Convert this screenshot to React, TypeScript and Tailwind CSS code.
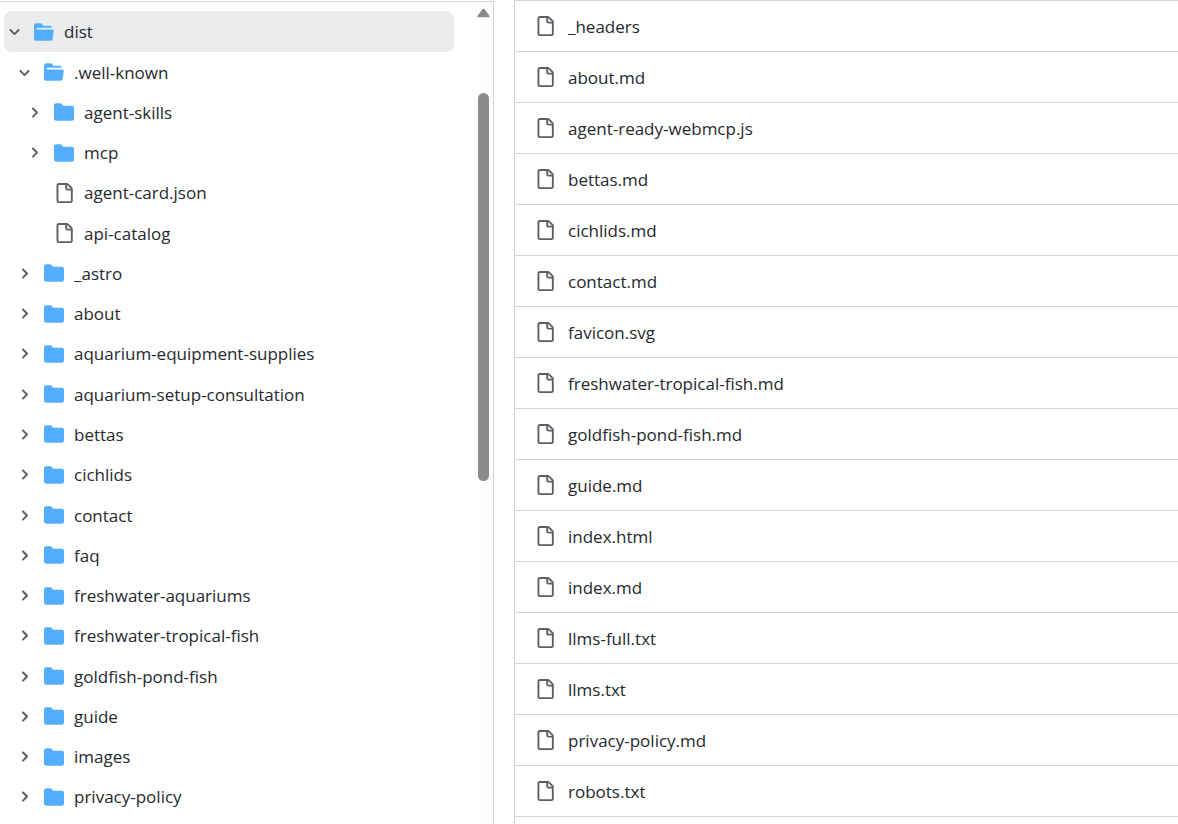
import { useState } from "react";

type TreeItem = {
  name: string;
  level: number;
  kind: "folder" | "open" | "file";
};

const tree: TreeItem[] = [
  { name: "dist", level: 0, kind: "open" },
  { name: ".well-known", level: 1, kind: "open" },
  { name: "agent-skills", level: 2, kind: "folder" },
  { name: "mcp", level: 2, kind: "folder" },
  { name: "agent-card.json", level: 2, kind: "file" },
  { name: "api-catalog", level: 2, kind: "file" },
  { name: "_astro", level: 1, kind: "folder" },
  { name: "about", level: 1, kind: "folder" },
  { name: "aquarium-equipment-supplies", level: 1, kind: "folder" },
  { name: "aquarium-setup-consultation", level: 1, kind: "folder" },
  { name: "bettas", level: 1, kind: "folder" },
  { name: "cichlids", level: 1, kind: "folder" },
  { name: "contact", level: 1, kind: "folder" },
  { name: "faq", level: 1, kind: "folder" },
  { name: "freshwater-aquariums", level: 1, kind: "folder" },
  { name: "freshwater-tropical-fish", level: 1, kind: "folder" },
  { name: "goldfish-pond-fish", level: 1, kind: "folder" },
  { name: "guide", level: 1, kind: "folder" },
  { name: "images", level: 1, kind: "folder" },
  { name: "privacy-policy", level: 1, kind: "folder" },
];

const files = [
  "_headers",
  "about.md",
  "agent-ready-webmcp.js",
  "bettas.md",
  "cichlids.md",
  "contact.md",
  "favicon.svg",
  "freshwater-tropical-fish.md",
  "goldfish-pond-fish.md",
  "guide.md",
  "index.html",
  "index.md",
  "llms-full.txt",
  "llms.txt",
  "privacy-policy.md",
  "robots.txt",
];

const indent = ["pl-[3px]", "pl-[13px]", "pl-[23px]"];

const paths = {
  folder:
    "M1.75 1A1.75 1.75 0 0 0 0 2.75v10.5C0 14.216.784 15 1.75 15h12.5A1.75 1.75 0 0 0 16 13.25v-8.5A1.75 1.75 0 0 0 14.25 3H7.5a.25.25 0 0 1-.2-.1l-.9-1.2C6.07 1.26 5.55 1 5 1H1.75Z",
  open: "M.513 1.513A1.75 1.75 0 0 1 1.75 1h3.5c.55 0 1.07.26 1.4.7l.9 1.2a.25.25 0 0 0 .2.1H13a1 1 0 0 1 1 1v.5H2.75a.75.75 0 0 0 0 1.5h11.978a1 1 0 0 1 .994 1.117L15 13.25A1.75 1.75 0 0 1 13.25 15H1.75A1.75 1.75 0 0 1 0 13.25V2.75c0-.464.184-.91.513-1.237Z",
  file: "M2 1.75C2 .784 2.784 0 3.75 0h6.586c.464 0 .909.184 1.237.513l2.914 2.914c.329.328.513.773.513 1.237v9.586A1.75 1.75 0 0 1 13.25 16h-9.5A1.75 1.75 0 0 1 2 14.25Zm1.75-.25a.25.25 0 0 0-.25.25v12.5c0 .138.112.25.25.25h9.5a.25.25 0 0 0 .25-.25V6h-2.75A1.75 1.75 0 0 1 9 4.25V1.5Zm6.75.062V4.25c0 .138.112.25.25.25h2.688l-.011-.013-2.914-2.914-.013-.011Z",
};

function ItemIcon({ kind }: { kind: TreeItem["kind"] }) {
  return (
    <svg
      viewBox="0 0 16 16"
      aria-hidden="true"
      className={`size-5 shrink-0 ${kind === "file" ? "text-[#5c6064]" : "text-[#54aeff]"}`}
    >
      <path fill="currentColor" d={paths[kind]} />
    </svg>
  );
}

function Chevron({ open }: { open: boolean }) {
  return (
    <svg
      viewBox="0 0 12 12"
      aria-hidden="true"
      className="size-[15px] shrink-0 text-[#5c6064]"
    >
      <path
        fill="currentColor"
        d={
          open
            ? "M6 8.825c-.2 0-.4-.1-.5-.2l-3.3-3.3c-.3-.3-.3-.8 0-1.1.3-.3.8-.3 1.1 0l2.7 2.7 2.7-2.7c.3-.3.8-.3 1.1 0 .3.3.3.8 0 1.1l-3.2 3.2c-.2.2-.4.3-.6.3Z"
            : "M4.7 10c-.2 0-.4-.1-.5-.2-.3-.3-.3-.8 0-1.1L6.9 6 4.2 3.3c-.3-.3-.3-.8 0-1.1.3-.3.8-.3 1.1 0l3.3 3.2c.3.3.3.8 0 1.1L5.3 9.7c-.2.2-.3.3-.6.3Z"
        }
      />
    </svg>
  );
}

export default function App() {
  const [selected, setSelected] = useState("dist");

  return (
    <div className="flex min-h-screen gap-5 bg-white font-['Open_Sans','Noto_Sans',sans-serif] text-[17px] leading-6 text-[#25292e]">
      <nav
        aria-label="File tree"
        className="relative mt-px w-[42%] max-w-[494px] shrink-0 border-t border-r border-[#d1d5da] pt-[9px] pr-[39px] pb-[7px] pl-1"
      >
        <ul className="grid h-full auto-rows-fr grid-rows-[41px]">
          {tree.map((item) => (
            <li key={item.name}>
              <button
                type="button"
                onClick={() => setSelected(item.name)}
                className={`flex h-full min-h-10 w-full items-center rounded-lg text-left ${indent[item.level]} ${
                  selected === item.name ? "bg-[#ebecee]" : "hover:bg-[#f3f4f6]"
                }`}
              >
                <span className="mr-3 w-[15px] shrink-0">
                  {item.kind !== "file" && <Chevron open={item.kind === "open"} />}
                </span>
                <ItemIcon kind={item.kind} />
                <span className="ml-[10px] truncate pt-px">{item.name}</span>
              </button>
            </li>
          ))}
        </ul>

        {/* scrollbar */}
        <div className="absolute inset-y-0 right-0 w-4 bg-[#fdfefe]">
          <svg
            viewBox="0 0 13 10"
            aria-hidden="true"
            className="mt-[6px] h-[10px] w-[13px]"
          >
            <path
              fill="#8b8b8b"
              d="M5.6.9a1.2 1.2 0 0 1 1.8 0l5 6.8c.5.8 0 1.6-.9 1.6h-10c-.9 0-1.4-.8-.9-1.6Z"
            />
          </svg>
          <div className="mt-[75px] ml-px h-[388px] w-[11px] rounded-full bg-[#8b8b8b]" />
        </div>
      </nav>

      <main className="min-w-0 flex-1 border-t border-l border-[#d1d5da]">
        <ul>
          {files.map((file) => (
            <li key={file} className="border-b border-[#d1d5da]">
              <a
                href={`#${file}`}
                className="flex h-[50px] items-center gap-[13px] pl-5 hover:bg-[#f6f8fa]"
              >
                <ItemIcon kind="file" />
                <span className="truncate pt-px">{file}</span>
              </a>
            </li>
          ))}
        </ul>
      </main>
    </div>
  );
}
